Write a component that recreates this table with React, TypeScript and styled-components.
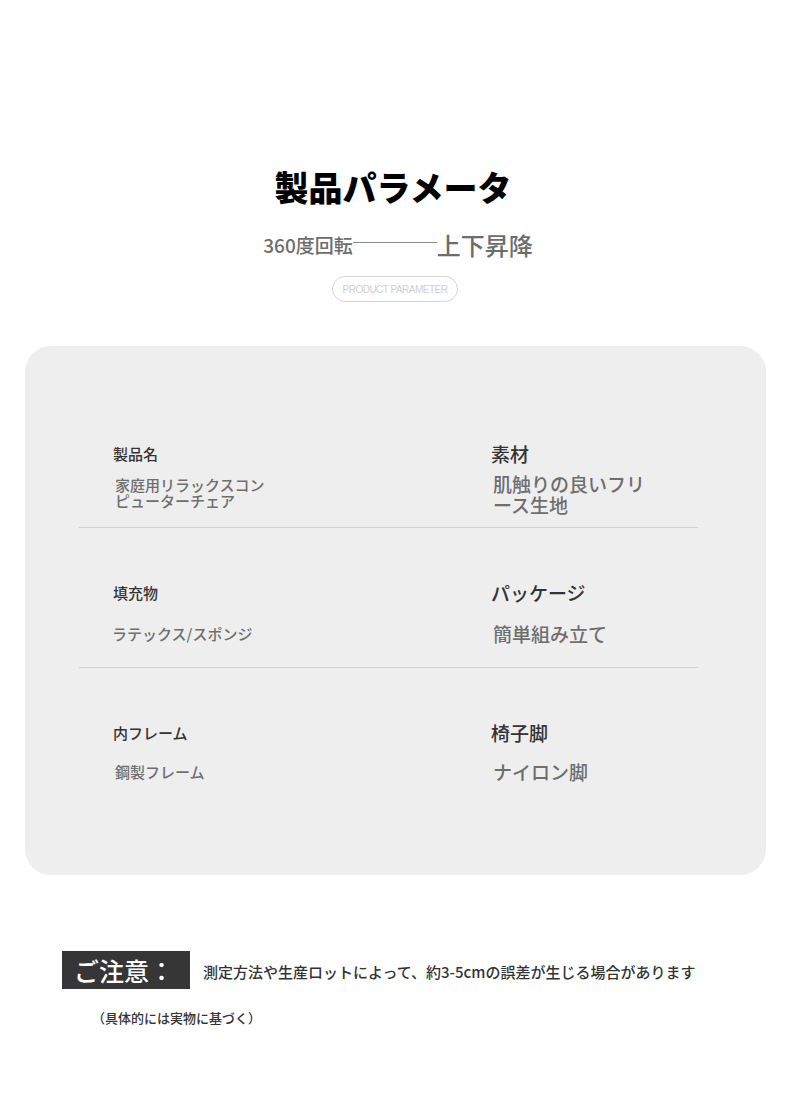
import React from "react";
import styled, { createGlobalStyle } from "styled-components";

const Global = createGlobalStyle`
  html, body { margin: 0; padding: 0; background: #ffffff; }
  body { font-family: "Noto Sans CJK JP", "Noto Sans", sans-serif; }
`;

const Page = styled.div`
  width: 790px;
  min-height: 1110px;
  background: #fff;
  display: flex;
  flex-direction: column;
`;

const Header = styled.header`
  padding-top: 167px;
  display: flex;
  flex-direction: column;
  align-items: center;
`;

const Title = styled.h1`
  margin: 0 4px 0 0;
  font-size: 34px;
  line-height: 40px;
  font-weight: 900;
  color: #000;
`;

const SubRow = styled.div`
  margin-top: 23px;
  height: 30px;
  display: flex;
  align-items: center;
  margin-left: 6px;
`;

const SubText = styled.span<{ $size: number }>`
  font-size: ${(p) => p.$size}px;
  line-height: 30px;
  color: #6c6c6c;
  font-weight: 500;
`;

const SubLine = styled.span`
  width: 84px;
  height: 1px;
  background: #8a8a8a;
  margin-top: -6px;
`;

const Pill = styled.div`
  margin-top: 16px;
  width: 126px;
  height: 26px;
  box-sizing: border-box;
  border: 1px solid #d6d6d6;
  border-radius: 13px;
  display: flex;
  align-items: center;
  justify-content: center;
  font-family: "Liberation Sans", Arial, sans-serif;
  font-size: 10px;
  letter-spacing: -0.5px;
  color: #cfcfcf;
`;

const Card = styled.section`
  margin: 44px 0 0 25px;
  width: 741px;
  height: 529px;
  background: #eeeeee;
  border-radius: 26px;
  box-sizing: border-box;
  padding-left: 54px;
`;

const Row = styled.div<{ $top: number; $height: number; $last?: boolean }>`
  width: 619px;
  height: ${(p) => p.$height}px;
  box-sizing: border-box;
  padding: ${(p) => p.$top}px 0 0 34px;
  border-bottom: ${(p) => (p.$last ? "none" : "1px solid #d2d2d2")};
  display: grid;
  grid-template-columns: 378px 1fr;
  align-items: start;
`;

const Cell = styled.div`
  display: flex;
  flex-direction: column;
`;

const Label = styled.div<{ $size: number }>`
  font-size: ${(p) => p.$size}px;
  line-height: 24px;
  font-weight: 500;
  color: #333;
  white-space: nowrap;
`;

const Value = styled.div<{ $size: number; $lh: number; $gap: number; $indent: number }>`
  margin-top: ${(p) => p.$gap}px;
  margin-left: ${(p) => p.$indent}px;
  font-size: ${(p) => p.$size}px;
  line-height: ${(p) => p.$lh}px;
  font-weight: 500;
  color: #6e6e6e;
  white-space: nowrap;
`;

const Notice = styled.div`
  margin: 76px 0 0 62px;
  display: flex;
  align-items: center;
  gap: 13px;
`;

const NoticeBadge = styled.div`
  width: 128px;
  height: 38px;
  background: #363636;
  color: #fff;
  font-size: 25px;
  line-height: 38px;
  font-weight: 500;
  padding-left: 12px;
  box-sizing: border-box;
  white-space: nowrap;
`;

const NoticeText = styled.div`
  font-size: 15px;
  font-weight: 500;
  color: #333;
  white-space: nowrap;
  margin-top: 3px;
`;

const NoticeSub = styled.div`
  margin: 19px 0 0 92px;
  font-size: 13px;
  line-height: 20px;
  font-weight: 500;
  color: #333;
`;

type Item = { label: string; value: string[] };

const rows: {
  top: number;
  height: number;
  gaps: [number, number];
  lh: [number, number];
  left: Item;
  right: Item;
  last?: boolean;
}[] = [
  {
    top: 96,
    height: 182,
    gaps: [11, 7],
    lh: [16, 21],
    left: { label: "製品名", value: ["家庭用リラックスコン", "ピューターチェア"] },
    right: { label: "素材", value: ["肌触りの良いフリ", "ース生地"] },
  },
  {
    top: 53,
    height: 140,
    gaps: [19, 19],
    lh: [20, 20],
    left: { label: "填充物", value: ["ラテックス/スポンジ"] },
    right: { label: "パッケージ", value: ["簡単組み立て"] },
  },
  {
    top: 53,
    height: 207,
    gaps: [17, 17],
    lh: [20, 20],
    left: { label: "内フレーム", value: ["鋼製フレーム"] },
    right: { label: "椅子脚", value: ["ナイロン脚"] },
    last: true,
  },
];

export default function App() {
  return (
    <Page>
      <Global />
      <Header>
        <Title>製品パラメータ</Title>
        <SubRow>
          <SubText $size={19}>360度回転</SubText>
          <SubLine />
          <SubText $size={24}>上下昇降</SubText>
        </SubRow>
        <Pill>PRODUCT PARAMETER</Pill>
      </Header>
      <Card>
        {rows.map((r, i) => (
          <Row key={i} $top={r.top} $height={r.height} $last={r.last}>
            <Cell>
              <Label $size={15}>{r.left.label}</Label>
              <Value $size={15} $lh={r.lh[0]} $gap={r.gaps[0]} $indent={i === 1 ? -1 : 2}>
                {r.left.value.map((v, j) => (
                  <div key={j}>{v}</div>
                ))}
              </Value>
            </Cell>
            <Cell>
              <Label $size={19}>{r.right.label}</Label>
              <Value $size={19} $lh={r.lh[1]} $gap={r.gaps[1]} $indent={2}>
                {r.right.value.map((v, j) => (
                  <div key={j}>{v}</div>
                ))}
              </Value>
            </Cell>
          </Row>
        ))}
      </Card>
      <Notice>
        <NoticeBadge>ご注意：</NoticeBadge>
        <NoticeText>測定方法や生産ロットによって、約3-5cmの誤差が生じる場合があります</NoticeText>
      </Notice>
      <NoticeSub>（具体的には実物に基づく）</NoticeSub>
    </Page>
  );
}
